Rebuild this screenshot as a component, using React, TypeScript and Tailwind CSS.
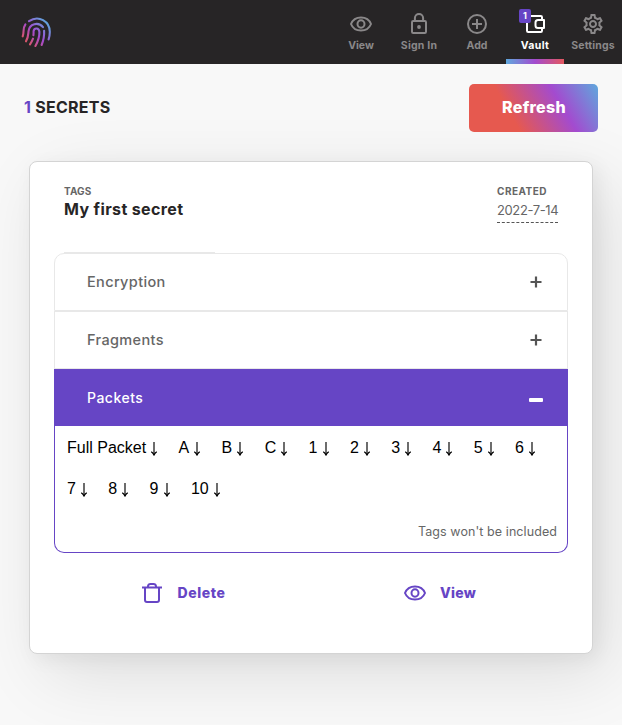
import React from 'react';
import { MdOutlineSettings } from 'react-icons/md';

function Fingerprint() {
  return (
    <svg width="32" height="32" viewBox="20 16 32 32" fill="none" stroke="url(#brand)" strokeWidth="2.100" strokeLinecap="round">
      <defs>
        <linearGradient id="brand" gradientUnits="userSpaceOnUse" x1="24" y1="44" x2="47" y2="22">
          <stop offset="0" stopColor="#e8584f" />
          <stop offset="0.5" stopColor="#a34bcf" />
          <stop offset="1" stopColor="#5fa5dd" />
        </linearGradient>
      </defs>
      <path d="M29 21.2C38.5 14.6 50 21.3 49.8 32.2C49.8 35 49.3 37.3 48.6 39.4" />
      <path d="M25.4 24.4C22.3 28.8 24.5 31.8 22.7 36.3" />
      <path d="M26 41.3C28.5 36.5 28.2 34.5 28.5 31.3C29.3 23.6 38.5 21.4 43 27.2" />
      <path d="M44.1 30.8C44.5 36 43.4 40.4 41.6 45" />
      <path d="M33.4 35.2C33.7 33.6 33.5 32 33.6 31C34.2 27.5 39 27.5 39.4 31.8C39.6 37 38 41.5 35.4 46" />
      <path d="M33 38.6C32.2 40.6 31.3 42.5 30 44.4" />
    </svg>
  );
}

function EyeIcon() {
  return (
    <svg width="24" height="24" viewBox="0 0 24 24" fill="none" stroke="currentColor" strokeWidth="2">
      <path d="M2 12C3.700 7.700 7.400 5.400 12 5.400S20.300 7.700 22 12C20.300 16.300 16.600 18.600 12 18.600S3.700 16.300 2 12Z" strokeLinejoin="round" />
      <ellipse cx="12" cy="12" rx="3.500" ry="3.700" />
    </svg>
  );
}

function LockIcon() {
  return (
    <svg width="24" height="24" viewBox="0 0 24 24" fill="none" stroke="currentColor" strokeWidth="2">
      <rect x="5" y="9" width="14" height="12" rx="1.2" />
      <path d="M7.9 9V6a4.1 4.1 0 0 1 8.2 0V9" />
      <circle cx="12" cy="15" r="1.9" fill="currentColor" stroke="none" />
    </svg>
  );
}

function AddIcon() {
  return (
    <svg width="24" height="24" viewBox="0 0 24 24" fill="none" stroke="currentColor" strokeWidth="2">
      <circle cx="12" cy="12" r="9" />
      <path d="M12 7v10M7 12h10" />
    </svg>
  );
}

function WalletIcon() {
  return (
    <svg width="24" height="24" viewBox="0 0 24 24" fill="none" stroke="currentColor" strokeWidth="2" strokeLinejoin="round">
      <path d="M19 8V5.2Q19 4 17.8 4H5.2Q4 4 4 5.2V18.8Q4 20 5.2 20H17.8Q19 20 19 18.800V16" />
      <path d="M21 8V16H15Q12.500 16 12.500 13.500V10.500Q12.500 8 15 8Z" />
    </svg>
  );
}

function TrashIcon() {
  return (
    <svg width="24" height="24" viewBox="0 0 24 24" fill="none" stroke="currentColor" strokeWidth="2">
      <path d="M2 6.500h20M5 6.500V19Q5 21 7 21H17Q19 21 19 19V6.500M8 6V5.200Q8.300 3 10.500 3H13.500Q15.700 3 16 5.200V6" />
    </svg>
  );
}

function DownArrow() {
  return (
    <svg className="ml-1 inline-block align-[-3px]" width="8" height="15" viewBox="0 0 8 15" fill="none" stroke="black">
      <path d="M4 1V14" strokeWidth="1.150" />
      <path d="M1.200 10.800Q2.900 11.700 4 14Q5.100 11.700 6.800 10.800" strokeWidth="1.200" />
    </svg>
  );
}

function NavItem({ icon, children, active, badge, tracking = '' }: { icon: React.ReactNode; children: React.ReactNode; active?: boolean; badge?: string; tracking?: string }) {
  return (
    <a className={`relative flex h-16 w-[58px] flex-col items-center pt-3 ${active ? 'text-white' : 'text-[#8a8889]'}`}>
      {icon}
      {badge && (
        <span className="absolute left-[13px] top-[9px] flex h-[14px] w-3 items-center justify-center rounded-[2px] bg-[#6645c5] text-[9px] font-bold text-white">{badge}</span>
      )}
      <span className={`mt-[2px] whitespace-nowrap text-[10.500px] leading-[15px] font-bold ${tracking}`}>{children}</span>
      {active && <span className="absolute bottom-0 left-0 h-[5px] w-full bg-[linear-gradient(90deg,#5fa8dd,#a34bcf_50%,#e4585f)]" />}
    </a>
  );
}

function Row({ title, first }: { title: string; first?: boolean }) {
  return (
    <div className={`flex h-[58px] items-center justify-between border border-[#e8e8e8] pl-8 pr-[25px] pb-px text-[#666] ${first ? 'rounded-t-[10px]' : ''}`}>
      <span className="mt-px text-[14.500px] font-medium tracking-[0.360px]">{title}</span>
      <svg width="12" height="12" viewBox="0 0 12 12" stroke="#555" strokeWidth="2.200"><path d="M6 .5v11M.5 6h11" /></svg>
    </div>
  );
}

const packets = ['Full Packet', 'A', 'B', 'C', '1', '2', '3', '4', '5', '6', '7', '8', '9', '10'];

export default function App() {
  return (
    <div className="h-[725px] w-[622px] overflow-hidden bg-[#f8f8f8] font-['Inter',sans-serif] text-[#272526]">
      <header className="flex h-16 items-start justify-between bg-[#272526] pl-5">
        <div className="pt-4"><Fingerprint /></div>
        <nav className="flex">
          <NavItem icon={<EyeIcon />}>View</NavItem>
          <NavItem icon={<LockIcon />} tracking="tracking-[0.2px]">Sign In</NavItem>
          <NavItem icon={<AddIcon />}>Add</NavItem>
          <NavItem icon={<WalletIcon />} active badge="1" tracking="tracking-[0.4px]">Vault</NavItem>
          <NavItem icon={<MdOutlineSettings size={24} />} tracking="tracking-[0.15px]">Settings</NavItem>
        </nav>
      </header>

      <div className="flex items-center justify-between px-6 pt-5">
        <h1 className="-mt-[2px] text-[16px] font-bold tracking-[0.250px]"><span className="text-[#6645c5]">1</span> SECRETS</h1>
        <button className="h-12 w-[129px] rounded-[5px] bg-[linear-gradient(60deg,#e6594f_33%,#a34bcf_69%,#5fa8dd)] pb-[2px] pl-px text-[16px] font-extrabold tracking-[0.3px] text-white">Refresh</button>
      </div>

      <main className="mt-[29px] ml-[29px] h-[493px] w-[564px] rounded-[8px] border border-[#d4d4d4] bg-white px-6 shadow-[16px_20px_70px_rgba(0,0,0,0.11),5px_5px_20px_rgba(0,0,0,0.06)]">
        <div className="flex h-[90px] justify-between px-[10px] pt-[22px]">
          <div>
            <div className="text-[10px] leading-[14px] font-bold tracking-[0.1px] text-[#666]">TAGS</div>
            <div className="text-[16px] leading-[22px] font-bold tracking-[0.37px]">My first secret</div>
          </div>
          <div className="w-[61px]">
            <div className="text-[10px] leading-[14px] font-bold tracking-[0.5px] text-[#666]">CREATED</div>
            <div className="h-[25px] border-b border-dashed border-[#555] text-[13px] leading-6 tracking-[-0.38px] whitespace-nowrap text-[#666]">2022-7-14</div>
          </div>
        </div>
        <div className="ml-[10px] h-px w-[151px] bg-[#e8e8e8]" />

        <section>
          <Row title="Encryption" first />
          <Row title="Fragments" />
          <div className="flex h-[57px] items-center justify-between bg-[#6645c5] pl-[33px] pr-[25px] text-white">
            <span className="text-[14px] font-medium tracking-[0.5px]">Packets</span>
            <span className="mt-1 h-1 w-[14px] rounded-[1px] bg-white" />
          </div>
          <div className="h-[127px] rounded-b-[10px] border border-t-0 border-[#6645c5] px-3 pt-[1px]">
            <div className="flex flex-wrap gap-x-[20.400px] font-['Liberation_Sans',sans-serif] text-[16px] leading-[41px] text-black">
              {packets.map((p) => <span key={p} className="h-[41px]">{p}<DownArrow /></span>)}
            </div>
            <p className="-mr-[2px] mt-[13px] text-right text-[12.500px] leading-5 tracking-[0.08px] text-[#666]">Tags won't be included</p>
          </div>
        </section>

        <div className="mt-7 flex text-[14px] font-extrabold text-[#6645c5]">
          <button className="flex w-1/2 items-center justify-center gap-[14px] tracking-[0.55px]"><TrashIcon /><span className="-mt-[2px]">Delete</span></button>
          <button className="flex w-1/2 items-center justify-center gap-[13px] tracking-[0.2px]"><EyeIcon /><span className="-mt-[2px]">View</span></button>
        </div>
      </main>
    </div>
  );
}
